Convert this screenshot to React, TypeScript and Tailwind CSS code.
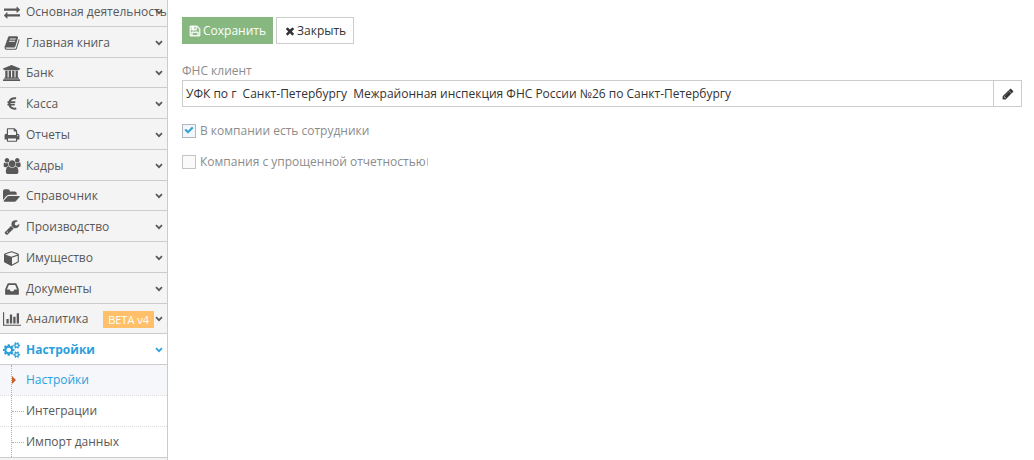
import { useState } from 'react';

const paths = {
  exchange:
    'M1792 1184v192q0 13-9.500 22.500t-22.500 9.500h-1376v192q0 13-9.500 22.500t-22.500 9.500q-12 0-24-10l-319-320q-9-9-9-22 0-14 9-23l320-320q9-9 23-9 13 0 22.500 9.500t9.500 22.500v192h1376q13 0 22.500 9.500t9.500 22.500zm0-544q0 14-9 23l-320 320q-9 9-23 9-13 0-22.500-9.500t-9.500-22.500v-192h-1376q-13 0-22.500-9.500t-9.500-22.500v-192q0-13 9.500-22.500t22.500-9.500h1376v-192q0-14 9-23t23-9q12 0 24 10l319 319q9 9 9 23z',
  book:
    'M1703 478q40 57 18 129l-275 906q-19 64-76.500 107.500t-122.500 43.500h-923q-77 0-148.500-53.500t-99.500-131.500q-24-67-2-127 0-4 3-27t4-37q1-8-3-21.500t-3-19.500q2-11 8-21t16.500-23.500 16.500-23.500q23-38 45-91.500t30-91.500q3-10 .5-30t-.5-28q3-11 17-28t17-23q21-36 42-92t25-90q1-9-2.500-32t.5-28q4-13 22-30.500t22-22.500q19-26 42.500-84.500t27.500-96.500q1-8-3-25.500t-2-26.500q2-8 9-18t18-23 17-21q8-12 16.500-30.500t15-35 16-36 19.500-32 26.500-23.500 36-11.500 47.500 5.500l-1 3q38-9 51-9h761q74 0 114 56t18 130l-274 906q-36 119-71.500 153.500t-128.500 34.500h-869q-27 0-38 15-11 16-1 43 24 70 144 70h923q29 0 56-15.500t35-41.500l300-987q7-22 5-57 38 15 59 43zm-1064 2q-4 13 2 22.500t20 9.500h608q13 0 25.500-9.500t16.500-22.500l21-64q4-13-2-22.500t-20-9.500h-608q-13 0-25.500 9.500t-16.500 22.500zm-83 256q-4 13 2 22.500t20 9.500h608q13 0 25.500-9.500t16.500-22.500l21-64q4-13-2-22.500t-20-9.500h-608q-13 0-25.500 9.500t-16.500 22.500z',
  bank:
    'M960 0l960 384v128h-128q0 26-20.500 45t-48.500 19h-1526q-28 0-48.500-19t-20.500-45h-128v-128zm-704 640h256v768h128v-768h256v768h128v-768h256v768h128v-768h256v768h59q28 0 48.500 19t20.500 45v64h-1664v-64q0-26 20.500-45t48.500-19h59v-768zm1595 960q28 0 48.500 19t20.500 45v128h-1920v-128q0-26 20.500-45t48.500-19h1782z',
  euro:
    'M1360 1307l35 159q3 12-3 22.500t-17 14.500l-5 1q-4 2-10.500 3.500t-16 4.500-21.500 5.500-25.500 5-30 5-33.500 4.500-36.500 3-38.500 1q-234 0-409-130.500t-238-351.500h-95q-13 0-22.500-9.500t-9.500-22.500v-113q0-13 9.500-22.500t22.500-9.500h66q-2-57 1-105h-67q-14 0-23-9t-9-23v-114q0-14 9-23t23-9h98q67-210 243.500-338t400.500-128q102 0 194 23 11 3 20 15 6 11 3 24l-43 159q-3 13-14 19.500t-24 2.500l-4-1q-4-1-11.500-2.500l-17.500-3.500-22.500-3.500-26-3-29-2.500-29.500-1q-126 0-226 64t-150 176h468q16 0 25 12 10 12 7 26l-24 114q-5 26-32 26h-488q-3 37 0 105h459q15 0 25 12 9 12 6 27l-24 112q-2 11-11 18.500t-20 7.500h-387q48 117 149.500 185.500t228.500 68.500q18 0 36-1.500t33.500-3.500 29.500-4.500 24.500-5 18.500-4.500l12-3 5-2q13-5 26 2 12 7 15 21z',
  print:
    'M448 1536h896v-256h-896v256zm0-640h896v-384h-160q-40 0-68-28t-28-68v-160h-640v640zm1152 64q0-26-19-45t-45-19-45 19-19 45 19 45 45 19 45-19 19-45zm128 0v416q0 13-9.500 22.500t-22.500 9.500h-224v160q0 40-28 68t-68 28h-960q-40 0-68-28t-28-68v-160h-224q-13 0-22.500-9.500t-9.500-22.500v-416q0-79 56.500-135.500t135.500-56.500h64v-544q0-40 28-68t68-28h672q40 0 88 20t76 48l152 152q28 28 48 76t20 88v256h64q79 0 135.500 56.500t56.500 135.500z',
  users:
    'M657 896q-162 5-265 128h-134q-82 0-138-40.500t-56-118.500q0-353 124-353 6 0 43.500 21t97.500 42.500 119 21.500q67 0 133-23-5 37-5 66 0 159 81 293zm1071 637q0 120-73 189.500t-194 69.500h-874q-121 0-194-69.500t-73-189.500q0-53 3.500-103.500t14-109 26.500-108.500 43-97.500 62-81 85.500-53.500 111.500-20q10 0 43 21.500t73 48 107 48 135 21.500 135-21.500 107-48 73-48 43-21.500q61 0 111.500 20t85.500 53.500 62 81 43 97.500 26.500 108.500 14 109 3.500 103.500zm-1024-1277q0 106-75 181t-181 75-181-75-75-181 75-181 181-75 181 75 75 181zm704 384q0 159-112.500 271.500t-271.500 112.500-271.500-112.500-112.500-271.500 112.500-271.500 271.500-112.500 271.500 112.500 112.500 271.500zm576 225q0 78-56 118.500t-138 40.500h-134q-103-123-265-128 81-134 81-293 0-29-5-66 66 23 133 23 59 0 119-21.500t97.500-42.500 43.500-21q124 0 124 353zm-128-609q0 106-75 181t-181 75-181-75-75-181 75-181 181-75 181 75 75 181z',
  folder:
    'M1879 952q0 31-31 66l-336 396q-43 51-120.500 86.500t-143.500 35.500h-1088q-34 0-60.500-13t-26.500-43q0-31 31-66l336-396q43-51 120.500-86.500t143.500-35.500h1088q34 0 60.500 13t26.500 43zm-343-344v160h-832q-94 0-197 47.500t-164 119.500l-337 396-5 6q0-4-.5-12.500t-.5-12.500v-960q0-92 66-158t158-66h320q92 0 158 66t66 158v32h544q92 0 158 66t66 158z',
  wrench:
    'M448 1472q0-26-19-45t-45-19-45 19-19 45 19 45 45 19 45-19 19-45zm644-420l-682 682q-37 37-90 37-52 0-91-37l-106-108q-38-36-38-90 0-53 38-91l681-681q39 98 114.500 173.500t173.500 114.500zm634-435q0 39-23 106-47 134-164.500 217.500t-258.500 83.500q-185 0-316.500-131.500t-131.500-316.500 131.500-316.500 316.500-131.500q58 0 121.500 16.500t107.500 46.500q16 11 16 28t-16 28l-293 169v224l193 107q5-3 79-48.500t135.500-81 70.500-35.500q15 0 23.500 10t8.500 25z',
  cube:
    'M896 1629l640-349v-636l-640 233v752zm-64-865l698-254-698-254-698 254zm832-252v768q0 35-18 65t-49 47l-704 384q-28 16-61 16t-61-16l-704-384q-31-17-49-47t-18-65v-768q0-40 23-73t61-47l704-256q22-8 44-8t44 8l704 256q38 14 61 47t23 73z',
  inbox:
    'M1151 960h316q-1-3-2.500-8t-2.500-8l-212-496h-708l-212 496q-1 2-2.500 8t-2.500 8h316l95 192h320zm513 30v482q0 26-19 45t-45 19h-1408q-26 0-45-19t-19-45v-482q0-62 25-123l238-552q10-25 36.500-42t52.500-17h832q26 0 52.500 17t36.500 42l238 552q25 61 25 123z',
  chart:
    'M640 896v512h-256v-512h256zm384-512v1024h-256v-1024h256zm1024 1152v128h-2048v-1536h128v1408h1920zm-640-896v768h-256v-768h256zm384-384v1152h-256v-1152h256z',
  cogs:
    'M896 896q0-106-75-181t-181-75-181 75-75 181 75 181 181 75 181-75 75-181zm768 512q0-52-38-90t-90-38-90 38-38 90q0 53 37.500 90.500t90.500 37.500 90.500-37.500 37.500-90.500zm0-1024q0-52-38-90t-90-38-90 38-38 90q0 53 37.500 90.500t90.500 37.500 90.500-37.500 37.500-90.500zm-384 421v185q0 10-7 19.500t-16 10.500l-155 24q-11 35-32 76 34 48 90 115 7 11 7 20 0 12-7 19-23 30-82.500 89.500t-78.500 59.500q-11 0-21-7l-115-90q-37 19-77 31-11 108-23 155-7 24-30 24h-186q-11 0-20-7.500t-10-17.500l-23-153q-34-10-75-31l-118 89q-7 7-20 7-11 0-21-8-144-133-144-160 0-9 7-19 10-14 41-53t47-61q-23-44-35-82l-152-24q-10-1-17-9.500t-7-19.500v-185q0-10 7-19.500t16-10.500l155-24q11-35 32-76-34-48-90-115-7-11-7-20 0-12 7-20 22-30 82-89t79-59q11 0 21 7l115 90q34-18 77-32 11-108 23-154 7-24 30-24h186q11 0 20 7.500t10 17.500l23 153q34 10 75 31l118-89q8-7 20-7 11 0 21 8 144 133 144 160 0 8-7 19-12 16-42 54t-45 60q23 48 34 82l152 23q10 2 17 10.500t7 19.500zm640 533v140q0 16-149 31-12 27-30 52 51 113 51 138 0 4-4 7-122 71-124 71-8 0-46-47t-52-68q-20 2-30 2t-30-2q-14 21-52 68t-46 47q-2 0-124-71-4-3-4-7 0-25 51-138-18-25-30-52-149-15-149-31v-140q0-16 149-31 13-29 30-52-51-113-51-138 0-4 4-7 4-2 35-20t59-34 30-16q8 0 46 46.500t52 67.500q20-2 30-2t30 2q51-71 92-112l6-2q4 0 124 70 4 3 4 7 0 25-51 138 17 23 30 52 149 15 149 31zm0-1024v140q0 16-149 31-12 27-30 52 51 113 51 138 0 4-4 7-122 71-124 71-8 0-46-47t-52-68q-20 2-30 2t-30-2q-14 21-52 68t-46 47q-2 0-124-71-4-3-4-7 0-25 51-138-18-25-30-52-149-15-149-31v-140q0-16 149-31 13-29 30-52-51-113-51-138 0-4 4-7 4-2 35-20t59-34 30-16q8 0 46 46.500t52 67.500q20-2 30-2t30 2q51-71 92-112l6-2q4 0 124 70 4 3 4 7 0 25-51 138 17 23 30 52 149 15 149 31z',
  floppy:
    'M512 1536h768v-384h-768v384zm896 0h128v-896q0-14-10-38.500t-20-34.500l-281-281q-10-10-34-20t-39-10v416q0 40-28 68t-68 28h-576q-40 0-68-28t-28-68v-416h-128v1280h128v-416q0-40 28-68t68-28h832q40 0 68 28t28 68v416zm-384-928v-320q0-13-9.500-22.500t-22.500-9.500h-192q-13 0-22.500 9.500t-9.500 22.500v320q0 13 9.500 22.500t22.500 9.500h192q13 0 22.500-9.500t9.500-22.500zm640 32v928q0 40-28 68t-68 28h-1344q-40 0-68-28t-28-68v-1344q0-40 28-68t68-28h928q40 0 88 20t76 48l280 280q28 28 48 76t20 88z',
  times:
    'M1490 1322q0 40-28 68l-136 136q-28 28-68 28t-68-28l-294-294-294 294q-28 28-68 28t-68-28l-136-136q-28-28-28-68t28-68l294-294-294-294q-28-28-28-68t28-68l136-136q28-28 68-28t68 28l294 294 294-294q28-28 68-28t68 28l136 136q28 28 28 68t-28 68l-294 294 294 294q28 28 28 68z',
  pencil:
    'M491 1536l91-91-235-235-91 91v107h128v128h107zm523-928q0-22-22-22-10 0-17 7l-542 542q-7 7-7 17 0 22 22 22 10 0 17-7l542-542q7-7 7-17zm-54-192l416 416-832 832h-416v-416zm683 96q0 53-37 90l-166 166-416-416 166-165q36-38 90-38 53 0 91 38l235 234q37 39 37 91z',
  check:
    'M1671 566q0 40-28 68l-724 724-136 136q-28 28-68 28t-68-28l-136-136-362-362q-28-28-28-68t28-68l136-136q28-28 68-28t68 28l294 295 656-657q28-28 68-28t68 28l136 136q28 28 28 68z',
};

type IconName = keyof typeof paths;

interface IconProps {
  name: IconName;
  width?: number;
  bold?: boolean;
  className: string;
}

function Icon({ name, width = 1792, bold, className }: IconProps) {
  return (
    <svg
      viewBox={`0 0 ${width} 1792`}
      fill="currentColor"
      stroke={bold ? 'currentColor' : 'none'}
      strokeWidth="60"
      aria-hidden="true"
      className={className}
    >
      <path d={paths[name]} />
    </svg>
  );
}

function Chevron() {
  return (
    <svg viewBox="0 0 8 6" aria-hidden="true" className="ml-auto h-[6px] w-2 shrink-0">
      <path d="M1 1.200L4 4.200L7 1.200" fill="none" stroke="currentColor" strokeWidth="1.700" />
    </svg>
  );
}

interface Item {
  icon: IconName;
  label: string;
  width?: number;
  badge?: string;
  active?: boolean;
}

const items: Item[] = [
  { icon: 'exchange', label: 'Основная деятельность' },
  { icon: 'book', label: 'Главная книга' },
  { icon: 'bank', label: 'Банк', width: 1920 },
  { icon: 'euro', label: 'Касса' },
  { icon: 'print', label: 'Отчеты' },
  { icon: 'users', label: 'Кадры', width: 2048 },
  { icon: 'folder', label: 'Справочник', width: 1920 },
  { icon: 'wrench', label: 'Производство' },
  { icon: 'cube', label: 'Имущество' },
  { icon: 'inbox', label: 'Документы' },
  { icon: 'chart', label: 'Аналитика', width: 2048, badge: 'BETA v4' },
  { icon: 'cogs', label: 'Настройки', width: 1920, active: true },
];

const subItems = ['Настройки', 'Интеграции', 'Импорт данных'];

function Sidebar() {
  return (
    <nav className="w-[168px] shrink-0 overflow-hidden border-r border-[#ccc] bg-[#f4f4f4] text-[#585858]">
      <ul className="-mt-1 grid min-h-[369px] auto-rows-fr">
        {items.map((item) => (
          <li
            key={item.label}
            className={
              item.active
                ? 'border-b border-[#ccc] bg-white font-bold text-[#2b9fdc]'
                : 'border-b border-[#ccc]'
            }
          >
            <a href="#" className="flex h-full items-center pt-[2px] pr-1 whitespace-nowrap">
              <span className="flex w-6 shrink-0 justify-center">
                <Icon name={item.icon} width={item.width} className="h-4 w-auto" />
              </span>
              <span className="ml-[2px] w-0 grow">{item.label}</span>
              {item.badge && (
                <span className="mr-[1px] bg-[#ffc069] px-[5px] text-[11px] leading-[17px] text-white">
                  {item.badge}
                </span>
              )}
              <Chevron />
            </a>
          </li>
        ))}
      </ul>
      <ul className="relative border-b border-[#ccc] bg-white">
        {subItems.map((label, i) => (
          <li
            key={label}
            className={
              i === 0
                ? 'bg-[#f5f7fb] text-[#2b9fdc]'
                : 'border-t border-dotted border-[#ddd]'
            }
          >
            <a href="#" className="flex h-[30px] items-center pl-3">
              {i === 0 ? (
                <svg viewBox="0 0 14 10" aria-hidden="true" className="h-[10px] w-[14px]">
                  <path d="M0 1L4 5L0 9Z" fill="#c8602c" />
                </svg>
              ) : (
                <span className="w-3 border-t border-dotted border-[#8ab8dc]" />
              )}
              <span className={i === 0 ? '' : 'ml-[2px]'}>{label}</span>
            </a>
          </li>
        ))}
        <li aria-hidden="true" className="absolute inset-y-0 left-[11px] border-l border-dotted border-[#8ab8dc]" />
      </ul>
    </nav>
  );
}

function Check({ label, initial, marked }: { label: string; initial: boolean; marked?: boolean }) {
  const [on, setOn] = useState(initial);
  return (
    <label className="flex h-4 w-fit items-center gap-1 text-[#8c8c8c]">
      <span className="relative flex size-[14px]">
        <input
          type="checkbox"
          checked={on}
          onChange={(e) => setOn(e.target.checked)}
          className="size-[14px] appearance-none border border-[#c4c4c4] bg-[#fafafa] checked:border-[#adb8c0] checked:bg-[#f3f6fa]"
        />
        {on && (
          <Icon name="check" className="pointer-events-none absolute top-[1px] left-[2px] size-[10px] text-[#32a3ce]" />
        )}
      </span>
      <span className="flex items-center">
        {label}
        {marked && <span className="ml-[1px] h-2 w-px bg-[#e8b4b4]" />}
      </span>
    </label>
  );
}

export default function App() {
  return (
    <div className="flex min-h-screen bg-white font-['Open_Sans','Noto_Sans',sans-serif] text-[12px] leading-[16px]">
      <Sidebar />
      <main className="min-w-0 grow pt-[17px] pr-3 pl-[14px]">
        <div className="flex gap-[3px]">
          <button
            type="button"
            className="flex h-[27px] items-center gap-[2px] bg-[#87b87f] px-[7px] text-white"
          >
            <Icon name="floppy" bold className="size-3" />
            Сохранить
          </button>
          <button
            type="button"
            className="flex h-[27px] items-center gap-[1px] border border-[#ccc] bg-white px-[7px] text-[#333]"
          >
            <Icon name="times" className="size-3" />
            Закрыть
          </button>
        </div>
        <label htmlFor="client" className="mt-[19px] block h-[17px] text-[#8c8c8c]">
          ФНС клиент
        </label>
        <div className="flex h-[27px] border border-[#ccc]">
          <input
            id="client"
            type="text"
            defaultValue="УФК по г  Санкт-Петербургу  Межрайонная инспекция ФНС России №26 по Санкт-Петербургу"
            className="min-w-0 grow px-[3px] text-[#333] outline-none"
          />
          <button
            type="button"
            aria-label="Изменить"
            className="flex w-7 items-center justify-center border-l border-[#ccc] text-[#333]"
          >
            <Icon name="pencil" bold className="size-3" />
          </button>
        </div>
        <div className="mt-4 flex flex-col gap-[15px]">
          <Check label="В компании есть сотрудники" initial />
          <Check label="Компания с упрощенной отчетностью" initial={false} marked />
        </div>
      </main>
    </div>
  );
}
